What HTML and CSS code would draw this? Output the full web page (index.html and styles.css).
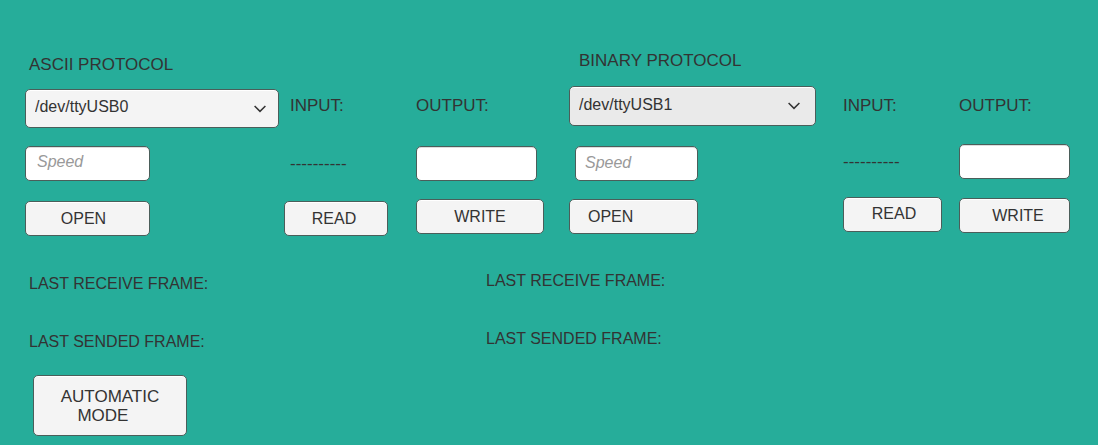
FILE: index.html
```html
<!DOCTYPE html>
<html lang="en">
<head>
<meta charset="utf-8">
<title>Serial protocols</title>
<link rel="stylesheet" href="styles.css">
</head>
<body>
<main class="page">
  <div class="panels">
    <section class="panel ascii">
      <div class="column port">
        <label class="caption" for="ascii-port">ASCII PROTOCOL</label>
        <div class="picker">
          <select class="control select" id="ascii-port"><option>/dev/ttyUSB0</option></select>
          <svg class="chevron" viewBox="0 0 12 8" aria-hidden="true"><path d="M0.6 1 6 6.4 11.4 1"/></svg>
        </div>
        <input class="control field speed" type="text" placeholder="Speed" aria-label="Speed">
        <button class="control button open" type="button">OPEN</button>
      </div>
      <div class="column input">
        <span class="caption">INPUT:</span>
        <output class="value">----------</output>
        <button class="control button read" type="button">READ</button>
      </div>
      <div class="column output">
        <label class="caption" for="ascii-output">OUTPUT:</label>
        <input class="control field" id="ascii-output" type="text">
        <button class="control button write" type="button">WRITE</button>
      </div>
    </section>
    <section class="panel binary">
      <div class="column port">
        <label class="caption" for="binary-port">BINARY PROTOCOL</label>
        <div class="picker">
          <select class="control select" id="binary-port"><option>/dev/ttyUSB1</option></select>
          <svg class="chevron" viewBox="0 0 12 8" aria-hidden="true"><path d="M0.6 1 6 6.4 11.4 1"/></svg>
        </div>
        <input class="control field speed" type="text" placeholder="Speed" aria-label="Speed">
        <button class="control button open" type="button">OPEN</button>
      </div>
      <div class="column input">
        <span class="caption">INPUT:</span>
        <output class="value">----------</output>
        <button class="control button read" type="button">READ</button>
      </div>
      <div class="column output">
        <label class="caption" for="binary-output">OUTPUT:</label>
        <input class="control field" id="binary-output" type="text">
        <button class="control button write" type="button">WRITE</button>
      </div>
    </section>
  </div>
  <div class="status">
    <section class="frames">
      <p class="line">LAST RECEIVE FRAME:</p>
      <p class="line">LAST SENDED FRAME:</p>
      <button class="control button automatic" type="button">AUTOMATIC
MODE   </button>
    </section>
    <section class="frames raised">
      <p class="line">LAST RECEIVE FRAME:</p>
      <p class="line">LAST SENDED FRAME:</p>
    </section>
  </div>
</main>
</body>
</html>
```
FILE: styles.css
```css
* {
  box-sizing: border-box;
}

body {
  margin: 0;
  background: #26ad9a;
  color: #333;
  font: 16px/20px "Liberation Sans", Arial, sans-serif;
}

.page {
  padding: 51px 28px 9px 25px;
}

.panels {
  display: grid;
  grid-template-columns: 519fr 501fr;
  gap: 25px;
}

.panel {
  display: grid;
}

.ascii {
  grid-template-columns: 259fr 132fr 128fr;
}

.binary {
  grid-template-columns: 274fr 116fr 111fr;
}

.column {
  display: flex;
  flex-direction: column;
  align-items: flex-start;
}

.caption,
.value {
  font-size: 17px;
}

/* Controls */

.control {
  height: 35px;
  margin: 0;
  border: 1px solid #4a5e5a;
  border-radius: 5px;
  color: #333;
  font: inherit;
}

.button {
  padding: 0;
  background: #f4f4f4;
  box-shadow: inset 0 1px #fff;
}

.field {
  width: 100%;
  padding: 0 11px 4px;
  background: #fff;
  box-shadow: inset 0 1px #ddd;
}

.field::placeholder {
  color: #999;
  font-style: italic;
  opacity: 1;
}

.picker {
  position: relative;
  align-self: stretch;
}

.select {
  display: block;
  width: 100%;
  height: 40px;
  padding: 0 36px 3px 9px;
  appearance: none;
  background: #f4f4f4;
  box-shadow: inset 0 1px #fff;
}

.chevron {
  position: absolute;
  top: 16px;
  right: 13px;
  width: 12px;
  height: 8px;
  fill: none;
  stroke: #333;
  stroke-width: 1.5;
  pointer-events: none;
}

/* ASCII panel */

.ascii .port {
  padding: 4px 5px 0 0;
}

.ascii .port .caption {
  margin: 0 0 14px 4px;
}

.ascii .select {
  height: 39px;
}

.ascii .port .speed {
  width: 125px;
  margin: 18px 0 20px;
}

.ascii .open {
  width: 125px;
  padding-right: 8px;
}

.ascii .input,
.ascii .output {
  padding-top: 45px;
}

.ascii .input .caption,
.ascii .value {
  margin-left: 6px;
}

.ascii .value {
  margin-top: 38px;
  margin-bottom: 27px;
}

.ascii .read {
  width: 104px;
  padding-right: 4px;
}

.ascii .output .field {
  width: 121px;
  margin: 30px 0 18px;
}

.ascii .write {
  width: 100%;
}

/* Binary panel */

.binary .port .caption {
  margin: 0 0 15px 10px;
}

.binary .picker {
  margin-right: 27px;
}

.binary .select {
  background: #eaeaea;
}

.binary .chevron {
  right: 16px;
}

.binary .port .speed {
  width: 123px;
  margin: 20px 0 18px 6px;
  padding: 0 9px 2px;
}

.binary .open {
  width: 129px;
  padding-left: 18px;
  text-align: left;
}

.binary .input,
.binary .output {
  padding-top: 45px;
}

.binary .value {
  margin-top: 36px;
  margin-bottom: 25px;
}

.binary .read {
  width: 99px;
  padding: 0 0 2px 3px;
}

.binary .output .field {
  margin: 28px 0 19px;
}

.binary .write {
  width: 100%;
  padding-left: 7px;
}

/* Frame status */

.status {
  display: grid;
  grid-template-columns: 461fr 584fr;
  padding-top: 38px;
}

.frames {
  display: flex;
  flex-direction: column;
  align-items: flex-start;
  gap: 38px;
}

.line {
  margin: 0 0 0 4px;
}

.raised {
  margin-top: -3px;
}

.raised .line {
  margin-left: 0;
}

.automatic {
  width: 154px;
  height: 61px;
  margin: -15px 0 0 8px;
  font-size: 17px;
  line-height: 19px;
  white-space: pre;
}
```
